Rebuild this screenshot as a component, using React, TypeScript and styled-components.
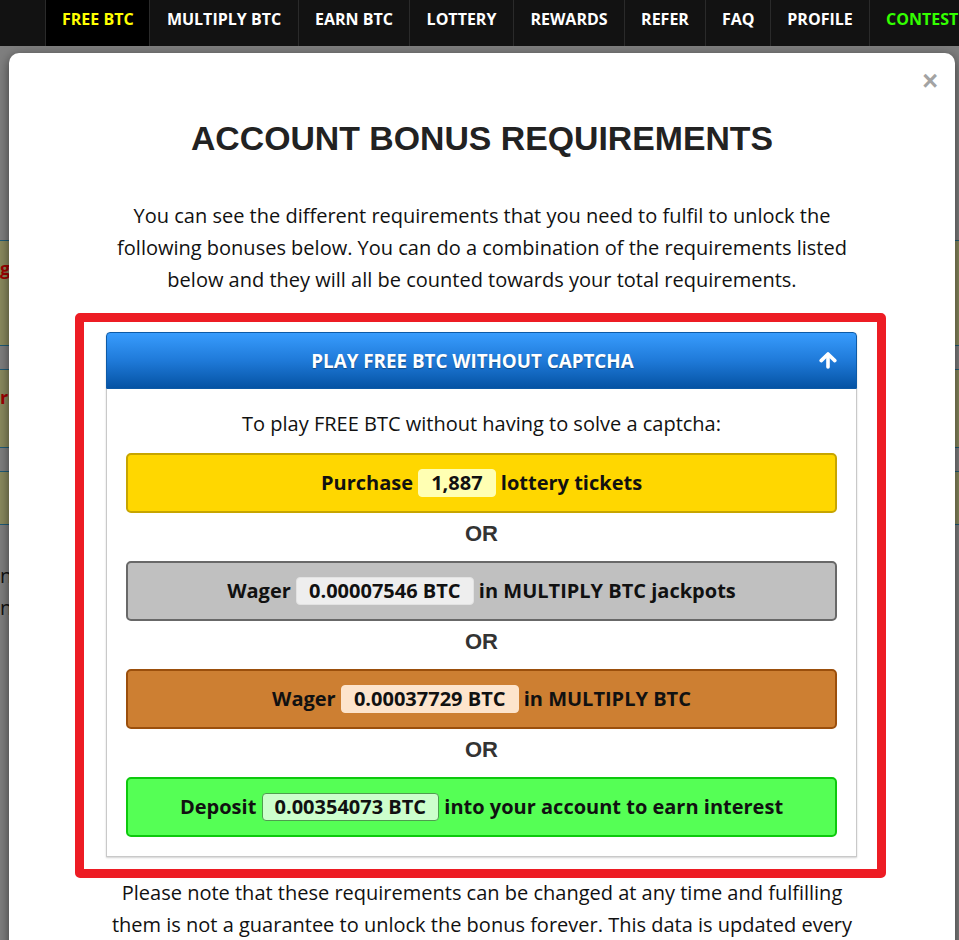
import React from "react";
import styled, { createGlobalStyle, css } from "styled-components";

const Global = createGlobalStyle`
  html, body { margin: 0; padding: 0; overflow: hidden; background: #7f7f7f; }
  body { font-family: "Open Sans", "Liberation Sans", sans-serif; }
  * { box-sizing: border-box; }
`;

const Page = styled.div`
  width: 959px;
  height: 940px;
  overflow: hidden;
  display: flex;
  flex-direction: column;
`;

const Nav = styled.nav`
  display: flex;
  height: 46px;
  padding-left: 45px;
  background: #121212;
  white-space: nowrap;
  overflow: hidden;
  flex-shrink: 0;
`;

const NavItem = styled.a<{ $tone?: "active" | "contest"; $w?: number }>`
  display: block;
  width: ${(p) => (p.$w ? `${p.$w}px` : "auto")};
  padding: 7px 16px 0;
  line-height: 24px;
  text-align: center;
  font-family: "Open Sans", sans-serif;
  font-weight: 700;
  font-size: 16px;
  color: #fff;
  text-decoration: none;
  border-right: 1px solid #2a2a2a;
  flex-shrink: 0;
  ${(p) =>
    p.$tone === "active" &&
    css`
      background: #000;
      color: #ffff00;
      border-left: 1px solid #2a2a2a;
    `}
  ${(p) =>
    p.$tone === "contest" &&
    css`
      color: #33ff00;
    `}
`;

const Stage = styled.div`
  position: relative;
  flex: 1;
  overflow: hidden;
  background: #7f7f7f;
`;

const Behind = styled.div`
  display: flex;
  flex-direction: column;
  gap: 23px;
  padding-top: 194px;
`;

const OliveBox = styled.div<{ $h: number }>`
  height: ${(p) => p.$h}px;
  background: #8a8a5e;
  border-top: 1px solid #1f5c78;
  border-bottom: 1px solid #1f5c78;
  padding: 15px 0 0 0;
  font-family: "Open Sans", sans-serif;
  font-weight: 700;
  font-size: 18px;
  line-height: 24px;
  color: #a00000;
`;

const BehindText = styled.p`
  margin: 12px 0 0;
  font-family: "Open Sans", sans-serif;
  font-size: 20px;
  line-height: 32px;
  color: #111;
`;

const Modal = styled.div`
  position: absolute;
  left: 9px;
  top: 7px;
  width: 946px;
  height: 1100px;
  background: #fff;
  border-radius: 10px;
  box-shadow: 0 3px 12px rgba(0, 0, 0, 0.55);
  display: flex;
  flex-direction: column;
  align-items: center;
`;

const CloseRow = styled.div`
  align-self: stretch;
  display: flex;
  justify-content: flex-end;
  padding: 14px 17px 0 0;
`;

const CloseButton = styled.span`
  font-family: "Liberation Sans", Arial, sans-serif;
  font-weight: 700;
  font-size: 27px;
  line-height: 28px;
  color: #a3a3a3;
  cursor: pointer;
`;

const Title = styled.h1`
  margin: 23px 0 0;
  font-family: "Liberation Sans", Arial, sans-serif;
  font-weight: 700;
  font-size: 33.8px;
  line-height: 40px;
  color: #222;
  text-align: center;
`;

const Lead = styled.p`
  margin: 42px 0 0;
  width: 764px;
  font-family: "Open Sans", sans-serif;
  font-size: 20px;
  line-height: 32px;
  color: #111;
  text-align: center;
`;

const Highlight = styled.div`
  align-self: flex-start;
  margin: 17px 0 0 66px;
  width: 811px;
  border: 9px solid #ed1c24;
  border-radius: 5px;
  padding: 10px 20px 12px 22px;
`;

const Panel = styled.div`
  border-radius: 4px 4px 0 0;
  box-shadow: 0 1px 2px rgba(0, 0, 0, 0.18);
`;

const PanelHeader = styled.div`
  display: flex;
  align-items: center;
  height: 57px;
  padding: 0 19px;
  border: 1px solid #0d5aa6;
  border-radius: 4px 4px 0 0;
  background: linear-gradient(to bottom, #389cfd 0%, #1f7ad9 50%, #0553a4 100%);
  color: #fff;
`;

const HeaderTitle = styled.span`
  flex: 1;
  text-align: center;
  font-family: "Open Sans", sans-serif;
  font-weight: 700;
  font-size: 18.8px;
  text-shadow: 0 1px 1px rgba(0, 0, 0, 0.35);
`;

const PanelBody = styled.div`
  border: 1px solid #c9c9c9;
  border-top: none;
  padding: 20px 19px 19px;
  display: flex;
  flex-direction: column;
`;

const BodyIntro = styled.p`
  margin: 0 0 14px;
  font-family: "Open Sans", sans-serif;
  font-size: 20px;
  line-height: 30px;
  color: #111;
  text-align: center;
`;

type Variant = "gold" | "silver" | "bronze" | "green";

const palette: Record<Variant, { bg: string; border: string; badge: string; badgeBorder: string }> = {
  gold: { bg: "#ffd700", border: "#c7a500", badge: "#ffffb3", badgeBorder: "#ffffb3" },
  silver: { bg: "#c0c0c0", border: "#686868", badge: "#eeeeee", badgeBorder: "#e2e2e2" },
  bronze: { bg: "#cd7f32", border: "#9b4f0c", badge: "#fde4cc", badgeBorder: "#fde4cc" },
  green: { bg: "#55ff55", border: "#0dc90d", badge: "#ccffcc", badgeBorder: "#4e9e4e" },
};

const ReqRow = styled.div<{ $v: Variant }>`
  height: 60px;
  line-height: 56px;
  text-align: center;
  white-space: nowrap;
  border: 2px solid ${(p) => palette[p.$v].border};
  border-radius: 5px;
  background: ${(p) => palette[p.$v].bg};
  font-family: "Open Sans", sans-serif;
  font-weight: 700;
  font-size: 20px;
  color: #111;
`;

const Badge = styled.span<{ $v: Variant }>`
  display: inline-block;
  vertical-align: middle;
  margin-top: -3px;
  padding: 0 12px;
  line-height: 26px;
  border-radius: 4px;
  border: 1px solid ${(p) => palette[p.$v].badgeBorder};
  background: ${(p) => palette[p.$v].badge};
`;

const Or = styled.div`
  height: 48px;
  padding-bottom: 6px;
  display: flex;
  align-items: center;
  justify-content: center;
  font-family: "Liberation Sans", Arial, sans-serif;
  font-weight: 700;
  font-size: 22px;
  color: #333;
`;

const Footnote = styled.p`
  margin: -1px 0 0;
  width: 764px;
  font-family: "Open Sans", sans-serif;
  font-size: 20px;
  line-height: 32px;
  color: #111;
  text-align: center;
`;

const ArrowUp = () => (
  <svg width="18" height="17" viewBox="0 0 18 17" aria-hidden="true">
    <g stroke="#fff" strokeWidth="3.6" strokeLinecap="round" strokeLinejoin="round" fill="none">
      <polyline points="2.2,8.6 9,2 15.8,8.6" />
      <line x1="9" y1="3" x2="9" y2="15" />
    </g>
  </svg>
);

const navItems: { label: string; tone?: "active" | "contest"; w?: number }[] = [
  { label: "FREE BTC", tone: "active", w: 105 },
  { label: "MULTIPLY BTC", w: 149 },
  { label: "EARN BTC", w: 111 },
  { label: "LOTTERY", w: 104 },
  { label: "REWARDS", w: 111 },
  { label: "REFER", w: 81 },
  { label: "FAQ", w: 65 },
  { label: "PROFILE", w: 99 },
  { label: "CONTEST", tone: "contest" },
];

const requirements: { v: Variant; pre: string; value: string; post: string }[] = [
  { v: "gold", pre: "Purchase", value: "1,887", post: "lottery tickets" },
  { v: "silver", pre: "Wager", value: "0.00007546 BTC", post: "in MULTIPLY BTC jackpots" },
  { v: "bronze", pre: "Wager", value: "0.00037729 BTC", post: "in MULTIPLY BTC" },
  { v: "green", pre: "Deposit", value: "0.00354073 BTC", post: "into your account to earn interest" },
];

export default function App() {
  return (
    <Page>
      <Global />
      <Nav>
        {navItems.map((n) => (
          <NavItem key={n.label} $tone={n.tone} $w={n.w} href="#">
            {n.label}
          </NavItem>
        ))}
      </Nav>
      <Stage>
        <Behind>
          <OliveBox $h={106}>g bonus</OliveBox>
          <OliveBox $h={79}>re</OliveBox>
          <OliveBox $h={54} />
          <BehindText>
            n
            <br />n
          </BehindText>
        </Behind>
        <Modal>
          <CloseRow>
            <CloseButton>×</CloseButton>
          </CloseRow>
          <Title>ACCOUNT BONUS REQUIREMENTS</Title>
          <Lead>
            You can see the different requirements that you need to fulfil to unlock the following
            bonuses below. You can do a combination of the requirements listed below and they will
            all be counted towards your total requirements.
          </Lead>
          <Highlight>
            <Panel>
              <PanelHeader>
                <HeaderTitle>PLAY FREE BTC WITHOUT CAPTCHA</HeaderTitle>
                <ArrowUp />
              </PanelHeader>
              <PanelBody>
                <BodyIntro>To play FREE BTC without having to solve a captcha:</BodyIntro>
                {requirements.map((r, i) => (
                  <React.Fragment key={i}>
                    {i > 0 && <Or>OR</Or>}
                    <ReqRow $v={r.v}>
                      {r.pre} <Badge $v={r.v}>{r.value}</Badge> {r.post}
                    </ReqRow>
                  </React.Fragment>
                ))}
              </PanelBody>
            </Panel>
          </Highlight>
          <Footnote>
            Please note that these requirements can be changed at any time and fulfilling them is
            not a guarantee to unlock the bonus forever. This data is updated every few minutes.
          </Footnote>
        </Modal>
      </Stage>
    </Page>
  );
}
